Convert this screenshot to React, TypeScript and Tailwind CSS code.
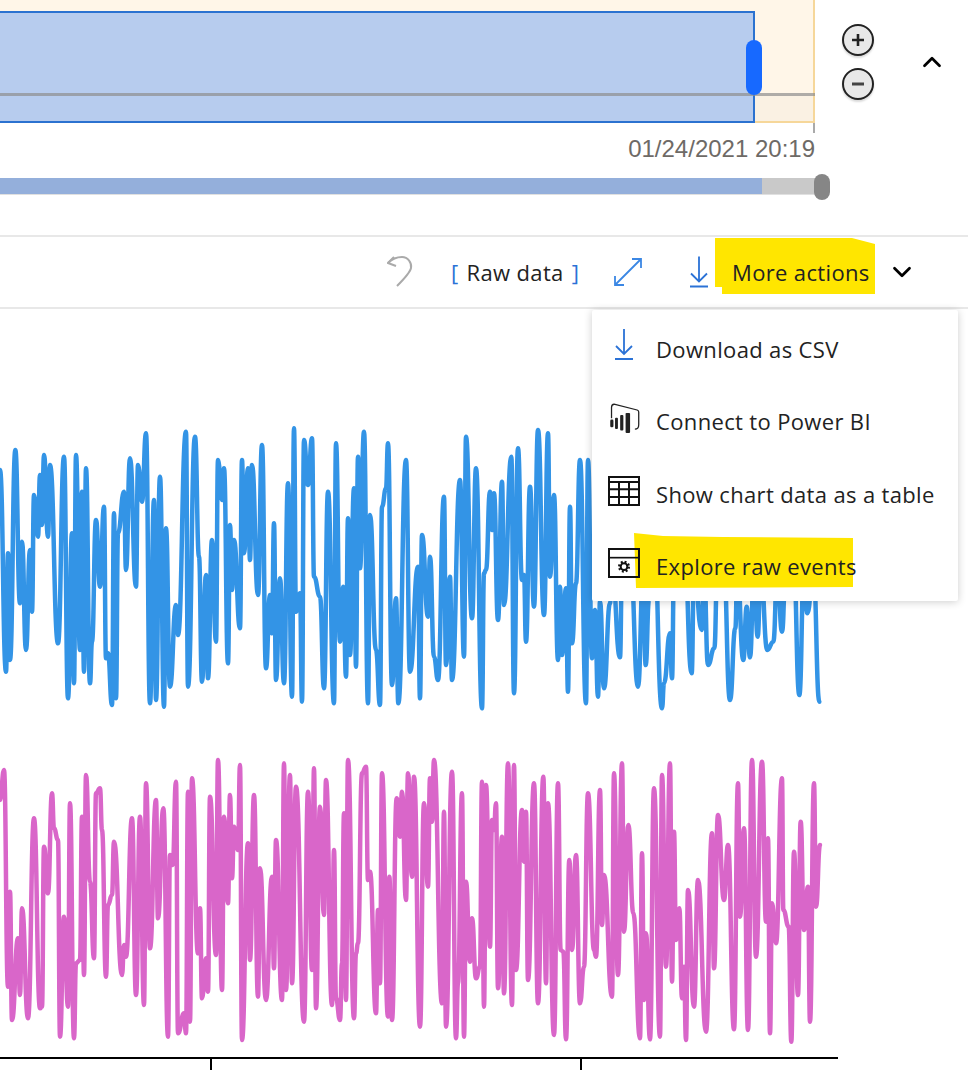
import { ChevronDown, ChevronUp } from 'lucide-react';

// chart traces, read off the picture as [x, y] runs: x offset, y offset, flat list at 3x
const blueRuns: [number, number, number[]][] = [
  [0, 420, [0,150,18,755,24,400,30,720,46,90,60,550,66,365,78,690,90,390,96,575,102,225,114,350,120,165,126,315,132,105,144,350,150,135,174,670,192,110,204,835,216,340,222,790,228,105,240,690,246,215,252,755,258,145,270,790,276,665,288,300,300,500,312,260,318,715,324,700,336,855,342,280,348,835,354,340,372,215,378,450,390,115,408,500,414,135,426,245,438,40,450,850,462,240,468,840,480,170,492,860,498,325,510,800,528,555,534,645,558,35,564,800,585,50,597,410,606,785,618,465,624,775,636,360,648,665,654,120,666,240,672,145,684,730,690,315,696,510,702,360,720,625,726,120,732,400,744,145,750,420,756,135,774,525,786,75,798,745,810,525,816,640,822,310,828,780,840,475,852,790,864,190,876,830,882,25,888,575]],
  [300, 420, [0,520,6,845,12,60,24,195,36,55,42,470,60,530,72,805,84,215,102,850,108,70,120,665,130,500,138,770,144,295,150,705,162,205,168,740,174,110,180,445,192,35,204,850,210,285,228,690,240,855,246,260,258,205,264,70,276,795,288,535,295,850,318,120,330,755,354,440,360,835,366,345,384,590,390,410,402,710,414,780,432,230,438,735,450,470,456,780,480,180,492,710,498,50,516,595,528,145,546,865,552,460,558,450,570,215,576,330,582,220,594,600,606,185,612,555,634,110,642,820,654,85,666,480,672,465,678,665,690,200,702,560,714,30,732,585,744,40,750,470,762,225,774,720,780,500,786,705,798,505,804,815,810,260,816,670,828,490,840,120]],
  [580, 420, [18,850,24,120,36,715,45,570,54,830,60,545,72,805,90,550,96,450,120,712,126,450,150,400,174,800,190,450,197,735,207,540,220,300,246,865,252,790,270,640,276,775,282,450,310,300,335,760,342,450,365,630,372,450,384,735,403,685,412,450,430,400,450,840,466,625,472,450,490,720,500,560,510,712,522,450,533,650,542,450,562,690,580,665,592,450,606,635,617,450,640,400,658,825,672,450,682,580,700,450,718,845]],
];

const pinkRuns: [number, number, number[]][] = [
  [0, 750, [0,150,12,60,24,710,30,425,36,810,54,565,60,735,66,475,84,805,102,205,120,775,126,770,132,290,144,430,156,130,162,235,174,270,180,860,192,500,204,770,210,160,222,865,228,640,240,630,246,200,252,675,258,75,270,395,282,625,288,130,300,115,306,240,318,680,324,465,336,435,342,275,366,675,372,585,378,620,396,205,408,735,420,200,432,765,438,100,450,595,468,150,474,505,490,175,504,860,510,315,518,345,528,95,534,850,552,790,558,850,564,125,570,815,576,85,594,610,600,475,606,745,618,625,624,725,630,140,648,615,654,30,666,720,672,200,684,460,690,135,696,385,702,230,714,300,720,45,726,870,744,280,750,630,762,135,774,740,780,355,798,750,816,380,822,655,828,270,846,750,852,40,858,720,870,75,876,700,888,110]],
  [300, 750, [12,815,24,125,36,660,42,55,48,775,60,170,72,495,78,90,96,765,102,300,108,745,120,810,126,640,132,190,138,750,144,30,162,805,168,610,174,580,186,70,198,50,204,390,210,365,228,790,234,480,240,700,246,70,264,800,268,380,276,810,290,145,300,260,306,125,318,450,324,70,336,380,342,80,360,830,372,160,384,410,390,85,396,215,402,30,426,760,432,185,438,830,456,65,468,865,474,700,486,130,492,860,498,395,510,635,516,505,528,685,540,650,546,95,552,770,558,105,570,590,576,210,582,240,588,160,594,715,606,260,612,730,624,40,636,765,642,45,648,660,666,180,672,335,678,185,684,690,702,100,714,760,730,80,738,700,744,160,762,855,774,100,782,600,790,605,798,868,808,330,816,600,828,315,840,760,852,650,864,130]],
  [580, 750, [42,600,48,620,60,120,66,525,72,375,96,740,102,70,114,675,126,40,132,545,145,225,160,490,180,865,186,310,192,750,198,550,210,868,222,115,240,860,246,75,258,650,270,40,276,695,282,245,288,570,298,475,306,745,312,650,318,870,324,420,342,770,354,390,378,845,396,250,402,655,414,195,432,450,444,285,462,838,474,100,480,500,492,235,504,840,516,30,528,620,546,35,558,515,564,265,570,850,576,460,588,580,606,85,610,480,626,530,634,875,642,305,654,735,662,215,672,540,684,410,690,815,702,100,708,470,720,285]],
];

function tracePath(runs: [number, number, number[]][]) {
  const pts: [number, number][] = [];
  for (const [ox, oy, list] of runs) {
    for (let i = 0; i < list.length; i += 2) {
      pts.push([ox + list[i] / 3, oy + list[i + 1] / 3]);
    }
  }
  let d = `M${pts[0][0]} ${pts[0][1]}`;
  for (let i = 1; i < pts.length; i++) {
    const [x0, y0] = pts[i - 1];
    const [x1, y1] = pts[i];
    const mid = (x0 + x1) / 2;
    d += `C${mid} ${y0} ${mid} ${y1} ${x1} ${y1}`;
  }
  return d;
}

function DownloadIcon({ className }: { className: string }) {
  return (
    <svg viewBox="0 0 20 32" className={className} fill="none" stroke="#2b72d6" strokeWidth="1.8">
      <path d="M10 1v25M2 18l8 8 8-8" />
      <path d="M1 31h18" strokeWidth="2" />
    </svg>
  );
}

function PowerBiIcon() {
  return (
    <svg viewBox="50 270 100 102" className="w-[33px] h-[34px] -mt-[8px]" fill="none">
      <path d="M61 322v-34q0-10 8-10l72 18q5 2 5 6v40q0 14-12 14" stroke="#222" strokeWidth="4" />
      <rect x="57" y="326" width="10" height="24" rx="4" fill="#222" />
      <rect x="72" y="320" width="9" height="35" rx="3" fill="#222" />
      <rect x="88" y="312" width="10" height="48" rx="3" fill="#222" />
      <rect x="105" y="305" width="14" height="63" rx="3" fill="#222" />
    </svg>
  );
}

function TableIcon() {
  return (
    <svg viewBox="0 0 96 90" className="w-[32px] h-[30px] -mt-[6px]" fill="none" stroke="#111" strokeWidth="6">
      <rect x="3" y="3" width="90" height="84" />
      <path d="M2 18h92M2 40h92M2 63h92M33 18v70M63 18v70" />
    </svg>
  );
}

function RawEventsIcon() {
  return (
    <svg viewBox="0 0 96 90" className="w-[32px] h-[30px] -mt-[8px]" fill="none" stroke="#111">
      <rect x="3" y="3" width="90" height="84" strokeWidth="6" />
      <path d="M2 29h92" strokeWidth="5" />
      <circle cx="48" cy="56" r="14" strokeWidth="8" strokeDasharray="5.5 5.5" />
      <circle cx="48" cy="56" r="10" strokeWidth="6" />
    </svg>
  );
}

const menuItems = [
  { label: 'Download as CSV', icon: <DownloadIcon className="w-[20px] h-[32px] ml-[6px] mr-[6px] -mt-[10px]" /> },
  { label: 'Connect to Power BI', icon: <PowerBiIcon /> },
  { label: 'Show chart data as a table', icon: <TableIcon /> },
  { label: 'Explore raw events', icon: <RawEventsIcon /> },
];

export default function App() {
  return (
    <div className="relative w-[968px] h-[1070px] overflow-hidden bg-white flex flex-col font-['Open_Sans',sans-serif]">
      {/* Time brush */}
      <div className="h-[235px] shrink-0 flex">
        <div className="w-[815px] shrink-0">
          <div className="relative h-[123px] w-[815px] bg-[#fff6e8] border-r-2 border-b-2 border-[#f6d79a]">
            <div className="absolute left-0 right-0 top-[95px] bottom-0 bg-black/[0.02]" />
            <div className="relative mt-0 top-[11px] w-[755px] h-[112px] bg-[#b7ccee] border-2 border-l-0 border-[#2b72d0]" />
            <div className="absolute left-0 -right-[2px] top-[93px] h-[3px] bg-[#8d8d8d]/70" />
            <div className="absolute left-[746px] top-[40px] w-[16px] h-[55px] rounded-full bg-[#1769ff]" />
          </div>
          <div className="h-[10px] flex justify-end">
            <div className="w-[2px] h-full bg-[#aaa]" />
          </div>
          <div className="h-[30px] mt-[1px] text-right text-[24px] leading-[30px] text-[#6e6a66] font-['Liberation_Sans',sans-serif]">
            01/24/2021 20:19
          </div>
          <div className="relative h-[17px] mt-[14px] w-[816px] flex border-b border-[#e0e0e0]">
            <div className="w-[762px] bg-[#94afdb]" />
            <div className="flex-1 bg-[#c9c9c9]" />
            <div className="absolute left-[814px] -top-[4px] w-[16px] h-[26px] rounded-full bg-[#868686]" />
          </div>
        </div>
        <div className="flex-1 relative">
          <div className="absolute left-[27px] top-[24px] flex flex-col gap-[12px]">
            <button className="w-[32px] h-[32px] rounded-full border-2 border-[#222] bg-[#e8e8e8] shadow-[0_2px_2px_rgba(0,0,0,0.15)] flex items-center justify-center">
              <svg viewBox="0 0 14 14" className="w-[14px] h-[14px]" stroke="#222" strokeWidth="2.6">
                <path d="M1 7h12M7 1v12" />
              </svg>
            </button>
            <button className="w-[32px] h-[32px] rounded-full border-2 border-[#222] bg-[#e8e8e8] shadow-[0_2px_2px_rgba(0,0,0,0.15)] flex items-center justify-center">
              <svg viewBox="0 0 14 14" className="w-[14px] h-[14px]" stroke="#444" strokeWidth="3">
                <path d="M1 7h12" />
              </svg>
            </button>
          </div>
          <ChevronUp className="absolute left-[101px] top-[47px] w-[32px] h-[30px] text-black" strokeWidth={2.2} />
        </div>
      </div>

      {/* Toolbar */}
      <div className="relative h-[74px] shrink-0 border-y-2 border-[#e8e8e8] flex items-center text-[#222] text-[22px] tracking-[0.35px]">
        <svg viewBox="0 0 26 33" className="absolute left-[387px] top-[18px] w-[26px] h-[33px]" fill="none" stroke="#aaa" strokeWidth="2">
          <path d="M7 2L1 8l8 3" />
          <path d="M1 8C6 3 11 2 15 2C21 2 25 8 24 13C23 18 17 24 10 31" />
        </svg>
        <div className="absolute left-[451px] top-[19px] flex items-center gap-[8px] whitespace-nowrap">
          <span className="text-[#2b72d6]">[</span>
          <span>Raw data</span>
          <span className="text-[#2b72d6]">]</span>
        </div>
        <svg viewBox="0 0 32 32" className="absolute left-[612px] top-[19px] w-[32px] h-[32px]" fill="none" stroke="#3b87e4" strokeWidth="1.8">
          <path d="M3 29L29 3M20 3h9v9M3 20v9h9" />
        </svg>
        <DownloadIcon className="absolute left-[689px] top-[18px] w-[20px] h-[33px]" />
        <svg viewBox="0 0 162 58" className="absolute left-[714px] top-0 w-[162px] h-[58px]" fill="#ffe600">
          <path d="M1 1L138 1L161 7L161 57L8 57L8 50L1 50Z" />
        </svg>
        <span className="absolute left-[732px] top-[19px] whitespace-nowrap">More actions</span>
        <ChevronDown className="absolute left-[886px] top-[20px] w-[32px] h-[30px] text-black" strokeWidth={2.2} />
      </div>

      {/* Chart area */}
      <svg viewBox="0 309 968 761" className="w-[968px] flex-1 block" fill="none" strokeLinejoin="round" strokeLinecap="round">
        <path d={tracePath(blueRuns)} stroke="#3394e6" strokeWidth="4.5" />
        <path d={tracePath(pinkRuns)} stroke="#d966c9" strokeWidth="4.5" />
        <path d="M0 1058h838M211 1058v12M581 1058v12" stroke="#000" strokeWidth="2" strokeLinecap="butt" />
      </svg>

      {/* More actions menu */}
      <div className="absolute left-[592px] top-[310px] w-[366px] h-[291px] bg-white rounded-[2px] shadow-[0_1px_8px_rgba(0,0,0,0.2)] text-[#222] text-[22px] tracking-[0.35px]">
        <svg viewBox="0 0 220 56" className="absolute left-[41px] top-[223px] w-[220px] h-[56px]" fill="#ffe600">
          <path d="M1 0L30 3L90 4L220 5L220 54L3 55Z" />
        </svg>
        <div className="relative flex flex-col pt-[3px]">
          {menuItems.map((item) => (
            <div key={item.label} className="h-[72.5px] flex items-center pl-[16px] gap-[16px] whitespace-nowrap">
              <div className="w-[32px] flex justify-start">{item.icon}</div>
              <span>{item.label}</span>
            </div>
          ))}
        </div>
      </div>
    </div>
  );
}
